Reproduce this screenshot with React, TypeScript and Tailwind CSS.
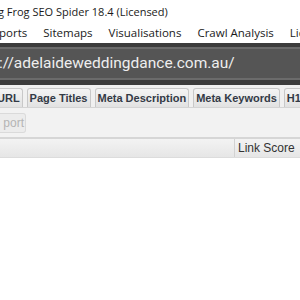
import React from "react";

const menuItems: string[] = ["ports", "Sitemaps", "Visualisations", "Crawl Analysis", "Licence"];
const tabs: string[] = ["URL", "Page Titles", "Meta Description", "Meta Keywords", "H1"];

const App = () => {
  return (
    <div className="w-[300px] h-[300px] overflow-hidden bg-white">
      {/* window title */}
      <div className="h-[22px] flex items-center whitespace-nowrap text-[11px] text-[#1a1a1a] [font-family:'Open_Sans',sans-serif] -ml-[2px] pt-[2px]">
        g Frog SEO Spider 18.4 (Licensed)
      </div>
      {/* menu bar */}
      <div className="h-[21px] flex items-center gap-[16px] whitespace-nowrap text-[11.5px] text-[#1a1a1a] [font-family:'Open_Sans',sans-serif] -ml-[1px]">
        {menuItems.map((item, index) => (
          <span key={index}>{item}</span>
        ))}
      </div>
      {/* url bar */}
      <div className="h-[42px] bg-[#3c3c3c] pt-[4px] pb-[5px]">
        <div className="h-full bg-[#555555] border-y-2 border-[#6b6b6b] flex items-center whitespace-nowrap text-[15.5px] text-[#eeeeee] [font-family:Roboto,sans-serif] -ml-[1px]">
          ://adelaideweddingdance.com.au/
        </div>
      </div>
      {/* tabs */}
      <div className="bg-[#f0f0f0] pt-[3px] flex items-end gap-[4px] whitespace-nowrap -ml-[6px] border-b border-[#d4d4d4]">
        {tabs.map((tab, index) => (
          <div
            key={index}
            className="h-[19px] px-[2px] flex items-center rounded-t-[3px] border border-b-0 border-[#c8c8c8] bg-gradient-to-b from-[#f4f4f4] to-[#e2e2e2] text-[11px] font-bold text-[#333a46] [font-family:'Liberation_Sans',sans-serif]"
          >
            {tab}
          </div>
        ))}
      </div>
      {/* toolbar */}
      <div className="h-[31px] bg-[#f2f2f2] flex items-center border-b-2 border-[#d6d6d6]">
        <div className="h-[20px] w-[26px] border border-[#dadada] rounded-r-[3px] border-l-0 bg-[#ececec] flex items-center justify-end pr-[1px] overflow-hidden text-[12px] text-[#b4b4b4] [font-family:'Liberation_Sans',sans-serif]">
          port
        </div>
      </div>
      {/* table header */}
      <div className="h-[19px] flex bg-gradient-to-b from-[#f3f3f3] to-[#e6e6e6] border-b border-[#dcdcdc]">
        <div className="w-[235px] border-r border-[#d2d2d2]"></div>
        <div className="pl-[3px] flex items-center whitespace-nowrap text-[12px] text-[#333333] [font-family:'Liberation_Sans',sans-serif]">
          Link Score
        </div>
      </div>
      <div className="bg-white h-[140px]"></div>
    </div>
  );
};

export default App;
